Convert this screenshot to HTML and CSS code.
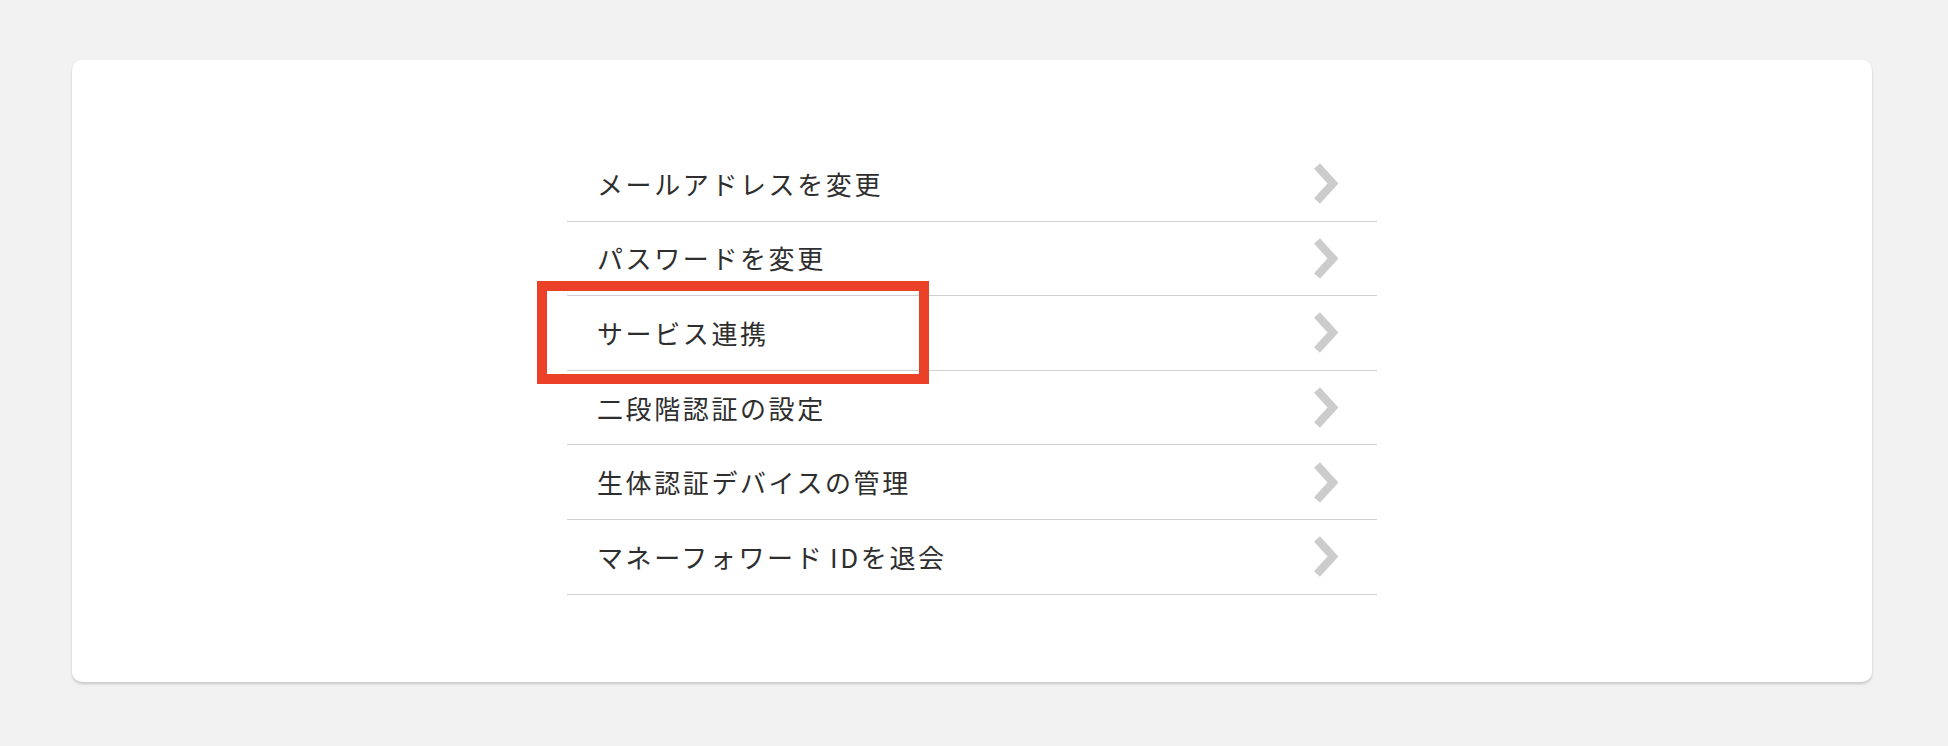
FILE: index.html
```html
<!DOCTYPE html>
<html lang="ja">
<head>
<meta charset="utf-8">
<title>アカウント設定</title>
<link rel="stylesheet" href="styles.css">
</head>
<body>
<div class="card">
  <ul class="menu">
    <li class="item"><span class="label">メールアドレスを変更</span><svg class="chev" viewBox="0 0 26 41"><polyline points="4,3 20,20.5 4,38"/></svg></li>
    <li class="item"><span class="label">パスワードを変更</span><svg class="chev" viewBox="0 0 26 41"><polyline points="4,3 20,20.5 4,38"/></svg></li>
    <li class="item highlighted"><span class="label">サービス連携</span><svg class="chev" viewBox="0 0 26 41"><polyline points="4,3 20,20.5 4,38"/></svg><span class="mark"></span></li>
    <li class="item"><span class="label">二段階認証の設定</span><svg class="chev" viewBox="0 0 26 41"><polyline points="4,3 20,20.5 4,38"/></svg></li>
    <li class="item"><span class="label">生体認証デバイスの管理</span><svg class="chev" viewBox="0 0 26 41"><polyline points="4,3 20,20.5 4,38"/></svg></li>
    <li class="item"><span class="label">マネーフォワード<span class="sp"> </span>IDを退会</span><svg class="chev" viewBox="0 0 26 41"><polyline points="4,3 20,20.5 4,38"/></svg></li>
  </ul>
</div>
</body>
</html>
```

FILE: styles.css
```css
* { box-sizing: border-box; }
html, body { margin: 0; padding: 0; }
body {
  background: #f2f2f2;
  font-family: "Noto Sans CJK JP", "Noto Sans", sans-serif;
  padding: 60px 76px 0 72px;
  height: 746px;
  overflow: hidden;
}
.card {
  width: 1800px;
  height: 622px;
  background: #fff;
  border-radius: 10px;
  box-shadow: 0 2px 3px rgba(0,0,0,0.18);
  padding-top: 87px;
}
.menu {
  list-style: none;
  margin: 0 auto;
  padding: 0;
  width: 810px;
}
.item {
  position: relative;
  display: flex;
  align-items: center;
  justify-content: space-between;
  height: 74.6px;
  border-bottom: 1px solid #d0d0d0;
  padding: 0 38px 0 30px;
}
.label {
  font-size: 26px;
  letter-spacing: 2.6px;
  color: #2e2e2e;
  line-height: 1;
}
.sp { letter-spacing: 0; }
.chev {
  width: 26px;
  height: 41px;
  display: block;
}
.chev polyline {
  fill: none;
  stroke: #cccccc;
  stroke-width: 8;
  stroke-linejoin: miter;
  stroke-linecap: butt;
}
.mark {
  position: absolute;
  left: -30px;
  top: -15px;
  width: 392px;
  height: 103px;
  border: 10px solid #ea4128;
  pointer-events: none;
}
```
